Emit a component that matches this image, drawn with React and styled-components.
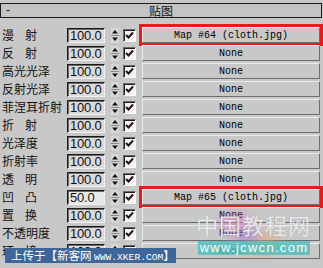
import React from 'react';
import styled, { createGlobalStyle } from 'styled-components';

const GlobalStyle = createGlobalStyle`
  html, body {
    margin: 0;
    padding: 0;
    background: #c8c8c8;
    overflow: hidden;
  }
`;

const rows = [
  { label: '漫射', spread: true, value: '100.0', map: 'Map #64 (cloth.jpg)', hl: true },
  { label: '反射', spread: true, value: '100.0' },
  { label: '高光光泽', value: '100.0' },
  { label: '反射光泽', value: '100.0' },
  { label: '菲涅耳折射', value: '100.0' },
  { label: '折射', spread: true, value: '100.0' },
  { label: '光泽度', value: '100.0' },
  { label: '折射率', value: '100.0' },
  { label: '透明', spread: true, value: '100.0' },
  { label: '凹凸', spread: true, value: '50.0', map: 'Map #65 (cloth.jpg)', hl: true, light: true },
  { label: '置换', spread: true, value: '100.0' },
  { label: '不透明度', value: '100.0' },
  { label: '环境', spread: true, value: '100.0' }
];

const Panel = styled.div`
  position: relative;
  width: 323px;
  height: 268px;
  overflow: hidden;
  padding-top: 3px;
  box-sizing: border-box;
  background: #c8c8c8;
  font-family: 'Noto Sans CJK SC', sans-serif;
  color: #111;
`;

const Header = styled.div`
  display: grid;
  grid-template-columns: 1fr auto 1fr;
  align-items: center;
  height: 15px;
  margin-right: 1px;
  box-sizing: border-box;
  border: 1px solid #1c1c1c;
  background: #c4c4c4;
  font-size: 12px;
  line-height: 13px;
`;

const Collapse = styled.span`
  padding-left: 5px;
  font-family: 'Liberation Sans', sans-serif;
`;

const Title = styled.span`
  letter-spacing: 0;
`;

const List = styled.div`
  margin-top: 8px;
`;

const Row = styled.div`
  display: flex;
  align-items: center;
  height: 18px;
`;

const Label = styled.span`
  width: 65px;
  padding-left: 2px;
  font-size: 12px;
  line-height: 18px;
  white-space: nowrap;
  letter-spacing: ${p => (p.$spread ? '11px' : '0')};
`;

const Field = styled.span`
  width: 38px;
  height: 15px;
  box-sizing: border-box;
  padding-left: 2px;
  border-top: 1px solid #1a1a1a;
  border-left: 1px solid #1a1a1a;
  border-right: 1px solid #f2f2f2;
  border-bottom: 1px solid #f2f2f2;
  box-shadow: inset 1px 1px 0 #6a6a6a;
  background: ${p => (p.$light ? '#e8e8e8' : '#dadada')};
  font-family: 'Liberation Sans', sans-serif;
  font-size: 13px;
  letter-spacing: -0.2px;
  line-height: 13px;
`;

const SpinBox = styled.svg`
  margin-left: 6px;
  flex: none;
`;

const Check = styled.span`
  display: flex;
  align-items: center;
  justify-content: center;
  margin-left: 4px;
  width: 13px;
  height: 13px;
  box-sizing: border-box;
  border-top: 1px solid #6a6a6a;
  border-left: 1px solid #6a6a6a;
  border-right: 1px solid #fafafa;
  border-bottom: 1px solid #fafafa;
  box-shadow: inset 1px 1px 0 #202020;
  background: #f2f2f2;
`;

const Slot = styled.div`
  flex: 1;
  margin-left: 6px;
  margin-right: 3px;
  height: 16px;
  box-sizing: border-box;
  display: flex;
  align-items: center;
  justify-content: center;
  border-top: 1px solid #ececec;
  border-left: 1px solid #ececec;
  border-right: 1px solid #6e6e6e;
  border-bottom: 1px solid #6e6e6e;
  background: #c8c8c8;
  font-family: 'Liberation Mono', monospace;
  font-size: 10px;
  color: #000;
  outline: ${p => (p.$hl ? '3px solid #e51c1c' : 'none')};
  outline-offset: 0;
`;

const Upload = styled.div`
  position: absolute;
  left: 5px;
  top: 248px;
  width: 171px;
  height: 15px;
  box-sizing: border-box;
  padding-left: 6px;
  background: #3e6698;
  color: #fff;
  font-size: 11.5px;
  line-height: 15px;
  white-space: nowrap;
  overflow: hidden;
`;

const Url = styled.span`
  font-family: 'Liberation Mono', monospace;
  font-size: 9.6px;
`;

const Blob = styled.svg`
  position: absolute;
  left: 205px;
  top: 196px;
  pointer-events: none;
`;

const BigMark = styled.div`
  position: absolute;
  left: 196px;
  top: 210px;
  font-size: 22px;
  line-height: 28px;
  letter-spacing: 1px;
  color: rgba(255, 255, 255, 0.78);
  text-shadow: 0 0 1px rgba(110, 110, 110, 0.5);
`;

const SiteBar = styled.div`
  position: absolute;
  left: 198px;
  top: 241px;
  width: 112px;
  height: 14px;
  background: rgba(86, 190, 184, 0.85);
  color: #f4ffff;
  font-family: 'Liberation Sans', sans-serif;
  font-size: 13px;
  line-height: 14px;
  letter-spacing: 1.3px;
  text-align: center;
`;

const Spinner = () => (
  <SpinBox width="8" height="15" viewBox="0 0 8 15">
    <rect x="0" y="0" width="8" height="15" fill="#d6d6d6" />
    <rect x="0" y="7" width="8" height="1" fill="#8a8a8a" />
    <polygon points="4,2 7,5.5 1,5.5" fill="#111" />
    <polygon points="1,9.5 7,9.5 4,13" fill="#111" />
  </SpinBox>
);

const Tick = () => (
  <svg width="9" height="9" viewBox="0 0 9 9">
    <path d="M1 4 L3.5 6.5 L8 1.5" stroke="#2a1212" strokeWidth="2" fill="none" />
  </svg>
);

const App = () => (
  <Panel>
    <GlobalStyle />
    <Header>
      <Collapse>-</Collapse>
      <Title>贴图</Title>
      <span />
    </Header>
    <List>
      {rows.map(r => (
        <Row key={r.label}>
          <Label $spread={r.spread}>{r.label}</Label>
          <Field $light={r.light}>{r.value}</Field>
          <Spinner />
          <Check>
            <Tick />
          </Check>
          <Slot $hl={r.hl}>{r.map || 'None'}</Slot>
        </Row>
      ))}
    </List>
    <Blob width="90" height="72" viewBox="0 0 90 72">
      <defs>
        <filter id="soft">
          <feGaussianBlur stdDeviation="5" />
        </filter>
      </defs>
      <g filter="url(#soft)" opacity="0.5">
        <ellipse cx="30" cy="28" rx="16" ry="12" fill="#e070b8" />
        <ellipse cx="55" cy="48" rx="20" ry="12" fill="#f0a060" />
        <ellipse cx="42" cy="40" rx="12" ry="10" fill="#9a70d0" />
      </g>
    </Blob>
    <BigMark>中国教程网</BigMark>
    <SiteBar>www.jcwcn.com</SiteBar>
    <Upload>
      上传于【新客网 <Url>WWW.XKER.COM</Url>】
    </Upload>
  </Panel>
);

export default App;
